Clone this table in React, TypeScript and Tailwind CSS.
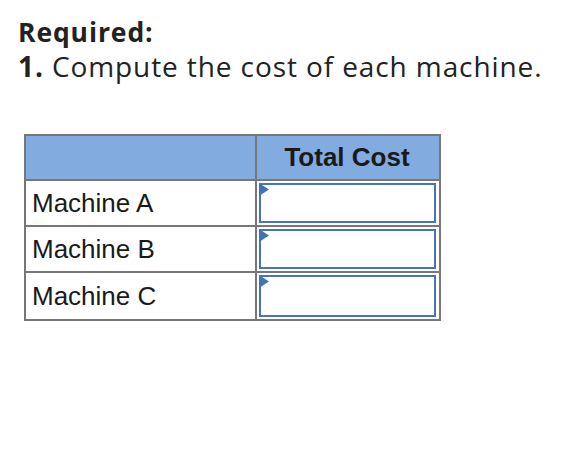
import React from "react";

const machines = ["Machine A", "Machine B", "Machine C"];

const AnswerInput: React.FC = () => (
  <div className="relative h-full w-full border-2 border-[#4a75b4] bg-white">
    {/* little blue corner marker */}
    <svg
      className="absolute -left-[2px] -top-[2px]"
      width="11"
      height="13"
      viewBox="0 0 11 13"
    >
      <polygon points="0,0 10,6.5 0,13" fill="#3f74bb" />
    </svg>
  </div>
);

export default function App() {
  return (
    <div className="min-h-screen w-full bg-white pt-[15px] pl-[18px]">
      <div className="font-['Open_Sans',sans-serif] text-[28px] leading-[34px] tracking-[0.9px] text-[#222]">
        <p className="text-[26.5px] font-bold">Required:</p>
        <p>
          <span className="font-bold">1.</span> Compute the cost of each machine.
        </p>
      </div>

      <div className="mt-[51px] ml-[6px] w-[417px] border-2 border-[#777] font-['Liberation_Sans',Arial,sans-serif] text-[#1a1a1a]">
        {/* HEADER */}
        <div className="flex h-[45px] border-b-2 border-[#777] bg-[#82abdf]">
          <div className="w-[231px] border-r-2 border-[#777]" />
          <div className="flex w-[180px] items-center justify-center text-[26px] font-bold">
            Total Cost
          </div>
        </div>

        {/* ROWS */}
        {machines.map((m, i) => (
          <div
            key={m}
            className={`flex h-[46px] ${i < machines.length - 1 ? "border-b-2 border-[#777]" : ""}`}
          >
            <div className="flex w-[231px] items-center border-r-2 border-[#777] pl-[6px] text-[26px]">
              {m}
            </div>
            <div className="w-[180px] py-[2px] pr-[1px] pl-[2px]">
              <AnswerInput />
            </div>
          </div>
        ))}
      </div>
    </div>
  );
}
